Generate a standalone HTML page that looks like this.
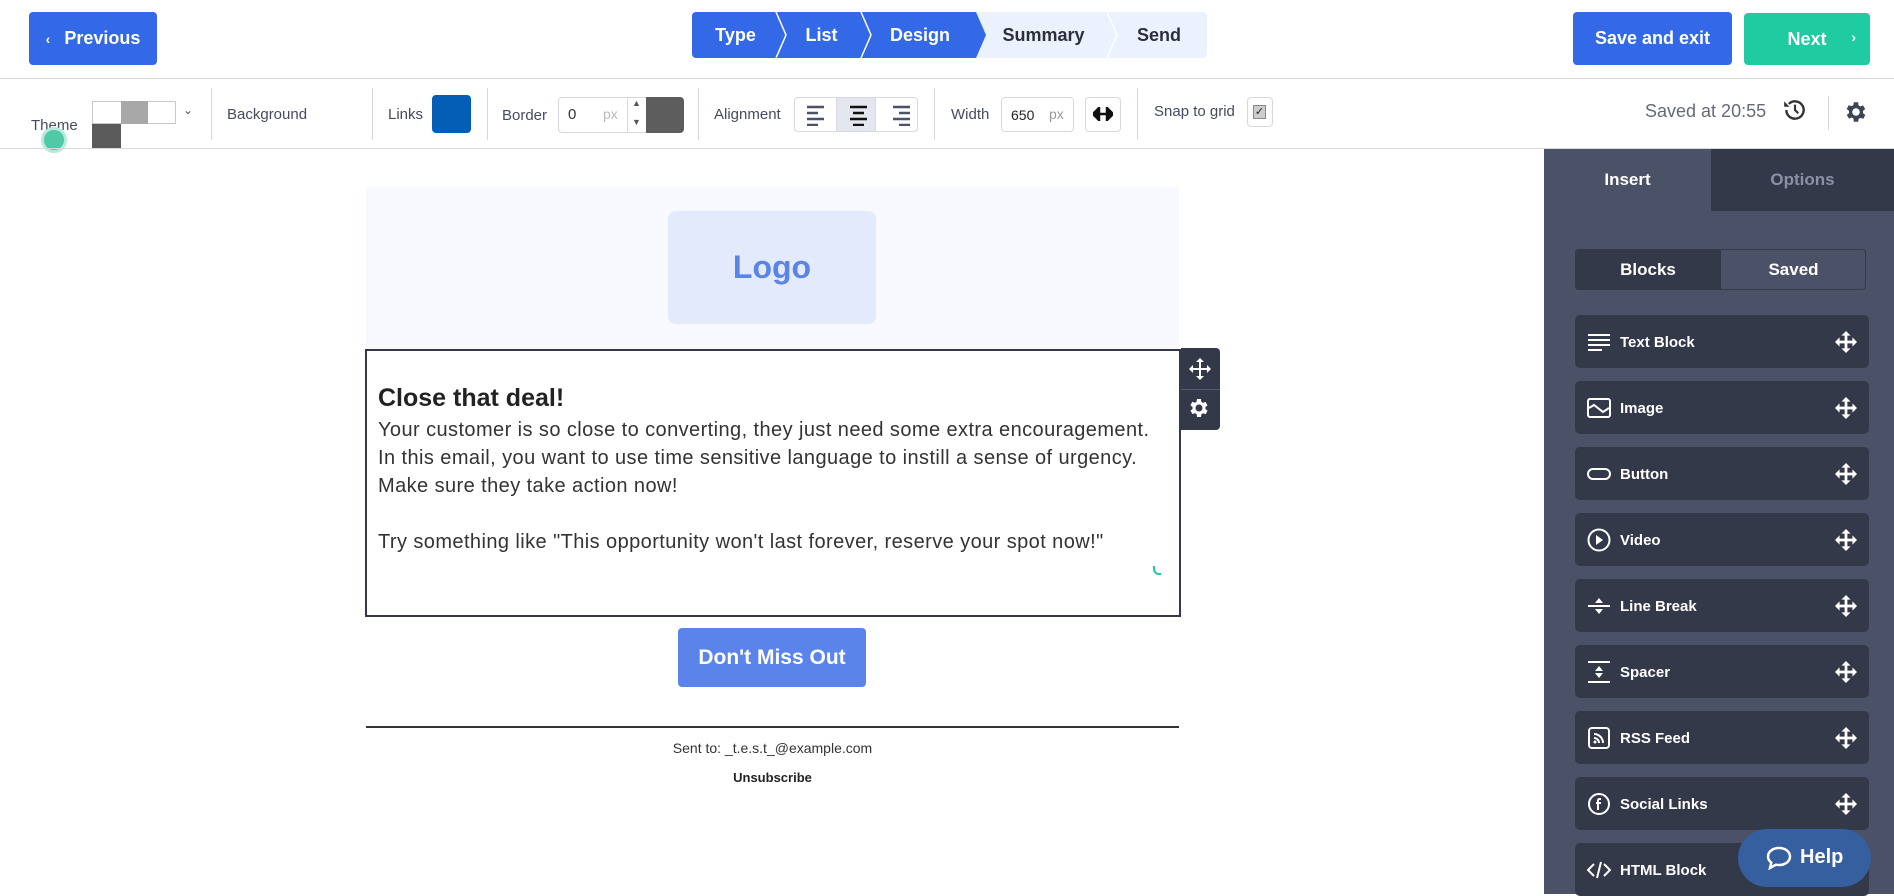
<!DOCTYPE html>
<html><head><meta charset="utf-8"><style>
*{box-sizing:border-box;margin:0;padding:0}
body{width:1894px;height:894px;overflow:hidden;background:#fff;font-family:"Liberation Sans",sans-serif;position:relative;color:#3d4254}
.a{position:absolute}
.btn{position:absolute;border-radius:4px;color:#fff;font-weight:bold;font-size:18px;display:flex;align-items:center;justify-content:center}
.vs{position:absolute;width:1px;background:#d5d8e0;top:88px;height:52px}
.lbl{position:absolute;font-size:15px;color:#454b5e}
.step{position:absolute;top:12px;height:46px;display:flex;align-items:center;justify-content:center;font-weight:bold;font-size:18px}
.blk{position:absolute;left:1575px;width:294px;height:53px;background:#343949;border-radius:5px;color:#fff;font-weight:bold;font-size:15px}
.blk span{position:absolute;left:45px;top:19px}
.blk svg.i{position:absolute;left:12px;top:15px}
.blk svg.m{position:absolute;right:12px;top:16px}
</style></head><body>
<!-- top bar -->
<div class="btn" style="left:29px;top:12px;width:128px;height:53px;background:#3369e7"><span style="margin-right:14px;font-size:14px">‹</span>Previous</div>
<div class="step" style="left:692px;width:87px;background:#3369e7;color:#fff;border-radius:4px 0 0 4px">Type</div>
<div class="step" style="left:779px;width:85px;background:#3369e7;color:#fff">List</div>
<div class="step" style="left:864px;width:112px;background:#3369e7;color:#fff">Design</div>
<div class="step" style="left:976px;width:135px;background:#ebf1fd;color:#2b2f3a">Summary</div>
<div class="step" style="left:1111px;width:96px;background:#ebf1fd;color:#2b2f3a;border-radius:0 4px 4px 0">Send</div>
<svg class="a" style="left:774px;top:12px" width="16" height="46"><polyline points="2,0 12,23 2,46" fill="none" stroke="#fff" stroke-width="1.5"/></svg>
<svg class="a" style="left:859px;top:12px" width="16" height="46"><polyline points="2,0 12,23 2,46" fill="none" stroke="#fff" stroke-width="1.5"/></svg>
<svg class="a" style="left:970px;top:12px" width="16" height="46"><polygon points="0,0 6,0 16,23 6,46 0,46" fill="#3369e7"/></svg>
<svg class="a" style="left:1105px;top:12px" width="16" height="46"><polyline points="2,0 12,23 2,46" fill="none" stroke="#fff" stroke-width="1.5"/></svg>
<div class="btn" style="left:1573px;top:12px;width:159px;height:53px;background:#3369e7">Save and exit</div>
<div class="btn" style="left:1744px;top:13px;width:126px;height:52px;background:#1fcba1">Next<span class="a" style="right:14px;top:16px;font-size:14px">›</span></div>
<div class="a" style="left:0;top:78px;width:1894px;height:1px;background:#d5d8e0"></div>
<!-- toolbar -->
<div class="lbl" style="left:31px;top:117px">Theme</div>
<div class="a" style="left:41px;top:127px;width:26px;height:26px;border-radius:50%;background:#4fc9a6;border:3px solid #b6ebdc"></div>
<div class="a" style="left:92px;top:101px;width:84px;height:23px;border:1px solid #c8c8c8;background:#fff"></div>
<div class="a" style="left:121px;top:101px;width:27px;height:23px;background:#a8a8a8"></div>
<div class="a" style="left:92px;top:124px;width:29px;height:24px;background:#5a5a5a"></div>
<div class="a" style="left:183px;top:103px;font-size:12px;color:#555">⌄</div>
<div class="vs" style="left:211px"></div>
<div class="lbl" style="left:227px;top:106px">Background</div>
<div class="vs" style="left:372px"></div>
<div class="lbl" style="left:388px;top:106px">Links</div>
<div class="a" style="left:432px;top:95px;width:39px;height:38px;background:#055eb6;border-radius:4px"></div>
<div class="vs" style="left:487px"></div>
<div class="lbl" style="left:502px;top:107px">Border</div>
<div class="a" style="left:558px;top:97px;width:126px;height:36px;border:1px solid #d5d8e0;border-radius:4px;background:#fff"></div>
<div class="a" style="left:568px;top:106px;font-size:15px;color:#333">0</div>
<div class="a" style="left:603px;top:106px;font-size:14px;color:#bbb">px</div>
<div class="a" style="left:627px;top:97px;width:1px;height:36px;background:#d5d8e0"></div>
<div class="a" style="left:632px;top:98px;font-size:9px;color:#555">▲</div>
<div class="a" style="left:632px;top:117px;font-size:9px;color:#555">▼</div>
<div class="a" style="left:646px;top:97px;width:38px;height:36px;background:#5d5d5d;border-radius:0 4px 4px 0"></div>
<div class="vs" style="left:698px"></div>
<div class="lbl" style="left:714px;top:106px">Alignment</div>
<div class="a" style="left:794px;top:97px;width:124px;height:35px;border:1px solid #d5d8e0;border-radius:4px;background:#fff"></div>
<div class="a" style="left:836px;top:98px;width:40px;height:33px;background:#e4e7ef;border-left:1px solid #d5d8e0;border-right:1px solid #d5d8e0"></div>
<svg class="a" style="left:805px;top:104px" width="110" height="22"><g stroke="#4b5166" stroke-width="2.5"><path d="M2 3h17M2 9h11M2 15h17M2 21h11"/><path d="M45 3h17M48 9h11M45 15h17M48 21h11" stroke="#111"/><path d="M88 3h17M94 9h11M88 15h17M94 21h11"/></g></svg>
<div class="vs" style="left:934px"></div>
<div class="lbl" style="left:951px;top:106px">Width</div>
<div class="a" style="left:1001px;top:97px;width:73px;height:35px;border:1px solid #d5d8e0;border-radius:4px"></div>
<div class="a" style="left:1011px;top:107px;font-size:14px;color:#222">650</div>
<div class="a" style="left:1049px;top:106px;font-size:14px;color:#999">px</div>
<div class="a" style="left:1085px;top:97px;width:36px;height:35px;border:1px solid #d5d8e0;border-radius:4px"></div>
<svg class="a" style="left:1093px;top:107px" width="20" height="14"><path d="M0 7l6-6v12zM20 7l-6-6v12zM5 7h10" fill="#111" stroke="#111" stroke-width="2.5"/></svg>
<div class="vs" style="left:1137px"></div>
<div class="lbl" style="left:1154px;top:103px">Snap to grid</div>
<div class="a" style="left:1247px;top:97px;width:26px;height:30px;border:1px solid #d5d8e0;border-radius:4px"></div>
<div class="a" style="left:1253px;top:105px;width:13px;height:14px;background:#ccc;border:1px solid #888;font-size:11px;line-height:12px;text-align:center;color:#222">✓</div>
<div class="a" style="left:1645px;top:101px;font-size:18px;color:#666a78">Saved at 20:55</div>
<svg class="a" style="left:1782px;top:97px" width="26" height="26" viewBox="0 0 24 24"><path d="M4 12a8 8 0 1 0 2.3-5.6" fill="none" stroke="#333" stroke-width="2.2"/><path d="M2 4v5h5z" fill="#333"/><path d="M12 7v5l3 3" fill="none" stroke="#333" stroke-width="2"/></svg>
<div class="a" style="left:1828px;top:96px;width:1px;height:34px;background:#d5d8e0"></div>
<svg class="a" style="left:1843px;top:99px" width="26" height="26" viewBox="0 0 24 24"><path fill="#3d4254" d="M19.4 13a7.5 7.5 0 0 0 0-2l2.1-1.6-2-3.5-2.5 1a7 7 0 0 0-1.7-1L15 3h-4l-.4 2.7a7 7 0 0 0-1.7 1l-2.5-1-2 3.5L6.6 11a7.5 7.5 0 0 0 0 2l-2.1 1.6 2 3.5 2.5-1a7 7 0 0 0 1.7 1L11 21h4l.4-2.7a7 7 0 0 0 1.7-1l2.5 1 2-3.5zM13 15.5a3.5 3.5 0 1 1 0-7 3.5 3.5 0 0 1 0 7z" transform="translate(-1 0)"/></svg>
<div class="a" style="left:0;top:148px;width:1894px;height:1px;background:#d5d8e0"></div>
<!-- email -->
<div class="a" style="left:366px;top:187px;width:813px;height:162px;background:#f7f9fe"></div>
<div class="a" style="left:668px;top:211px;width:208px;height:113px;background:#e3eafc;border-radius:8px;display:flex;align-items:center;justify-content:center;color:#5a84e6;font-weight:bold;font-size:32px">Logo</div>
<div class="a" style="left:365px;top:349px;width:816px;height:268px;border:2px solid #343949"></div>
<div class="a" style="left:1181px;top:348px;width:39px;height:82px;background:#343949;border-radius:0 4px 4px 0"></div>
<div class="a" style="left:1181px;top:389px;width:39px;height:1px;background:#555b6e"></div>
<svg class="a" style="left:1188px;top:356px" width="24" height="26" viewBox="0 0 24 24"><path d="M12 2v20M2 12h20" stroke="#fff" stroke-width="2"/><path d="M12 1l-4 4h8zM12 23l-4-4h8zM1 12l4-4v8zM23 12l-4-4v8z" fill="#fff"/></svg>
<svg class="a" style="left:1187px;top:396px" width="24" height="24" viewBox="0 0 24 24"><path fill="#fff" d="M19.4 13a7.5 7.5 0 0 0 0-2l2.1-1.6-2-3.5-2.5 1a7 7 0 0 0-1.7-1L15 3h-4l-.4 2.7a7 7 0 0 0-1.7 1l-2.5-1-2 3.5L6.6 11a7.5 7.5 0 0 0 0 2l-2.1 1.6 2 3.5 2.5-1a7 7 0 0 0 1.7 1L11 21h4l.4-2.7a7 7 0 0 0 1.7-1l2.5 1 2-3.5zM13 15.5a3.5 3.5 0 1 1 0-7 3.5 3.5 0 0 1 0 7z" transform="translate(-1 0)"/></svg>
<div class="a" style="left:378px;top:384px;font-size:25px;font-weight:bold;color:#222">Close that deal!</div>
<div class="a" style="left:378px;top:416px;font-size:20px;line-height:28px;color:#333;white-space:nowrap;letter-spacing:0.42px">Your customer is so close to converting, they just need some extra encouragement.<br>In this email, you want to use time sensitive language to instill a sense of urgency.<br>Make sure they take action now!<br><br>Try something like "This opportunity won't last forever, reserve your spot now!"</div>
<div class="a" style="left:1153px;top:566px;width:8px;height:9px;border-left:2px solid #1fcba1;border-bottom:2px solid #1fcba1;border-radius:0 0 0 6px"></div>
<div class="btn" style="left:678px;top:628px;width:188px;height:59px;background:#5a84ea;font-size:21px">Don't Miss Out</div>
<div class="a" style="left:366px;top:726px;width:813px;height:2px;background:#333"></div>
<div class="a" style="left:366px;top:740px;width:813px;text-align:center;font-size:14px;color:#333">Sent to: _t.e.s.t_@example.com</div>
<div class="a" style="left:366px;top:770px;width:813px;text-align:center;font-size:13px;font-weight:bold;color:#222">Unsubscribe</div>
<!-- sidebar -->
<div class="a" style="left:1544px;top:149px;width:350px;height:745px;background:#4b5166"></div>
<div class="a" style="left:1711px;top:149px;width:183px;height:62px;background:#343949"></div>
<div class="a" style="left:1544px;top:170px;width:167px;text-align:center;color:#fff;font-weight:bold;font-size:17px">Insert</div>
<div class="a" style="left:1711px;top:170px;width:183px;text-align:center;color:#8b91a5;font-weight:bold;font-size:17px">Options</div>
<div class="a" style="left:1575px;top:249px;width:291px;height:41px;border:1px solid #343949;border-radius:4px;background:#4b5166"></div>
<div class="a" style="left:1575px;top:249px;width:146px;height:41px;background:#343949;border-radius:4px 0 0 4px;color:#fff;font-weight:bold;font-size:17px;text-align:center;line-height:41px">Blocks</div>
<div class="a" style="left:1721px;top:249px;width:145px;height:41px;color:#fff;font-weight:bold;font-size:17px;text-align:center;line-height:41px">Saved</div>

<div class="blk" style="top:315px"><svg class="i" width="24" height="24"><path d="M1 5h22M1 10h22M1 15h22M1 20h14" stroke="#fff" stroke-width="2"/></svg><span>Text Block</span><svg class="m" width="22" height="22" viewBox="0 0 24 24"><path d="M12 2v20M2 12h20" stroke="#fff" stroke-width="3"/><path d="M12 0l-5 5h10zM12 24l-5-5h10zM0 12l5-5v10zM24 12l-5-5v10z" fill="#fff"/></svg></div>
<div class="blk" style="top:381px"><svg class="i" width="24" height="24"><rect x="1" y="3" width="22" height="18" rx="2" fill="none" stroke="#fff" stroke-width="2"/><path d="M2 12l5-3 9 7 6-4" fill="none" stroke="#fff" stroke-width="2"/></svg><span>Image</span><svg class="m" width="22" height="22" viewBox="0 0 24 24"><path d="M12 2v20M2 12h20" stroke="#fff" stroke-width="3"/><path d="M12 0l-5 5h10zM12 24l-5-5h10zM0 12l5-5v10zM24 12l-5-5v10z" fill="#fff"/></svg></div>
<div class="blk" style="top:447px"><svg class="i" width="24" height="24"><rect x="1" y="7" width="22" height="10" rx="5" fill="none" stroke="#fff" stroke-width="2"/></svg><span>Button</span><svg class="m" width="22" height="22" viewBox="0 0 24 24"><path d="M12 2v20M2 12h20" stroke="#fff" stroke-width="3"/><path d="M12 0l-5 5h10zM12 24l-5-5h10zM0 12l5-5v10zM24 12l-5-5v10z" fill="#fff"/></svg></div>
<div class="blk" style="top:513px"><svg class="i" width="24" height="24"><circle cx="12" cy="12" r="10.5" fill="none" stroke="#fff" stroke-width="2"/><path d="M9 7l7 5-7 5z" fill="#fff"/></svg><span>Video</span><svg class="m" width="22" height="22" viewBox="0 0 24 24"><path d="M12 2v20M2 12h20" stroke="#fff" stroke-width="3"/><path d="M12 0l-5 5h10zM12 24l-5-5h10zM0 12l5-5v10zM24 12l-5-5v10z" fill="#fff"/></svg></div>
<div class="blk" style="top:579px"><svg class="i" width="24" height="24"><path d="M1 12h22" stroke="#fff" stroke-width="2"/><path d="M12 4l-4 5h8zM12 20l-4-5h8z" fill="#fff"/></svg><span>Line Break</span><svg class="m" width="22" height="22" viewBox="0 0 24 24"><path d="M12 2v20M2 12h20" stroke="#fff" stroke-width="3"/><path d="M12 0l-5 5h10zM12 24l-5-5h10zM0 12l5-5v10zM24 12l-5-5v10z" fill="#fff"/></svg></div>
<div class="blk" style="top:645px"><svg class="i" width="24" height="24"><path d="M1 2h22M1 22h22" stroke="#fff" stroke-width="2"/><path d="M12 6l-4 5h8zM12 18l-4-5h8z" fill="#fff"/></svg><span>Spacer</span><svg class="m" width="22" height="22" viewBox="0 0 24 24"><path d="M12 2v20M2 12h20" stroke="#fff" stroke-width="3"/><path d="M12 0l-5 5h10zM12 24l-5-5h10zM0 12l5-5v10zM24 12l-5-5v10z" fill="#fff"/></svg></div>
<div class="blk" style="top:711px"><svg class="i" width="24" height="24"><rect x="2" y="2" width="20" height="20" rx="3" fill="none" stroke="#fff" stroke-width="2"/><path d="M7 8a9 9 0 0 1 9 9M7 12a5 5 0 0 1 5 5" fill="none" stroke="#fff" stroke-width="2"/><circle cx="8" cy="16" r="1.5" fill="#fff"/></svg><span>RSS Feed</span><svg class="m" width="22" height="22" viewBox="0 0 24 24"><path d="M12 2v20M2 12h20" stroke="#fff" stroke-width="3"/><path d="M12 0l-5 5h10zM12 24l-5-5h10zM0 12l5-5v10zM24 12l-5-5v10z" fill="#fff"/></svg></div>
<div class="blk" style="top:777px"><svg class="i" width="24" height="24"><circle cx="12" cy="12" r="10" fill="none" stroke="#fff" stroke-width="2"/><path d="M14 7h-1.5a1.5 1.5 0 0 0-1.5 1.5V18M9 11h5" fill="none" stroke="#fff" stroke-width="2"/></svg><span>Social Links</span><svg class="m" width="22" height="22" viewBox="0 0 24 24"><path d="M12 2v20M2 12h20" stroke="#fff" stroke-width="3"/><path d="M12 0l-5 5h10zM12 24l-5-5h10zM0 12l5-5v10zM24 12l-5-5v10z" fill="#fff"/></svg></div>
<div class="blk" style="top:843px"><svg class="i" width="24" height="24"><path d="M7 6l-6 6 6 6M17 6l6 6-6 6M14 4l-4 16" fill="none" stroke="#fff" stroke-width="2"/></svg><span>HTML Block</span></div>
<div class="a" style="left:1738px;top:829px;width:133px;height:58px;border-radius:29px;background:#355f9e;color:#fff;font-weight:bold;font-size:20px"><svg class="a" style="left:28px;top:17px" width="26" height="24" viewBox="0 0 26 24"><path d="M13 2C6.5 2 2 5.8 2 10.5c0 2.5 1.3 4.6 3.3 6.1L4 22l6-3.3c1 .2 2 .3 3 .3 6.5 0 11-3.8 11-8.5S19.5 2 13 2z" fill="none" stroke="#fff" stroke-width="2.5"/></svg><span class="a" style="left:62px;top:17px">Help</span></div>
</body></html>
